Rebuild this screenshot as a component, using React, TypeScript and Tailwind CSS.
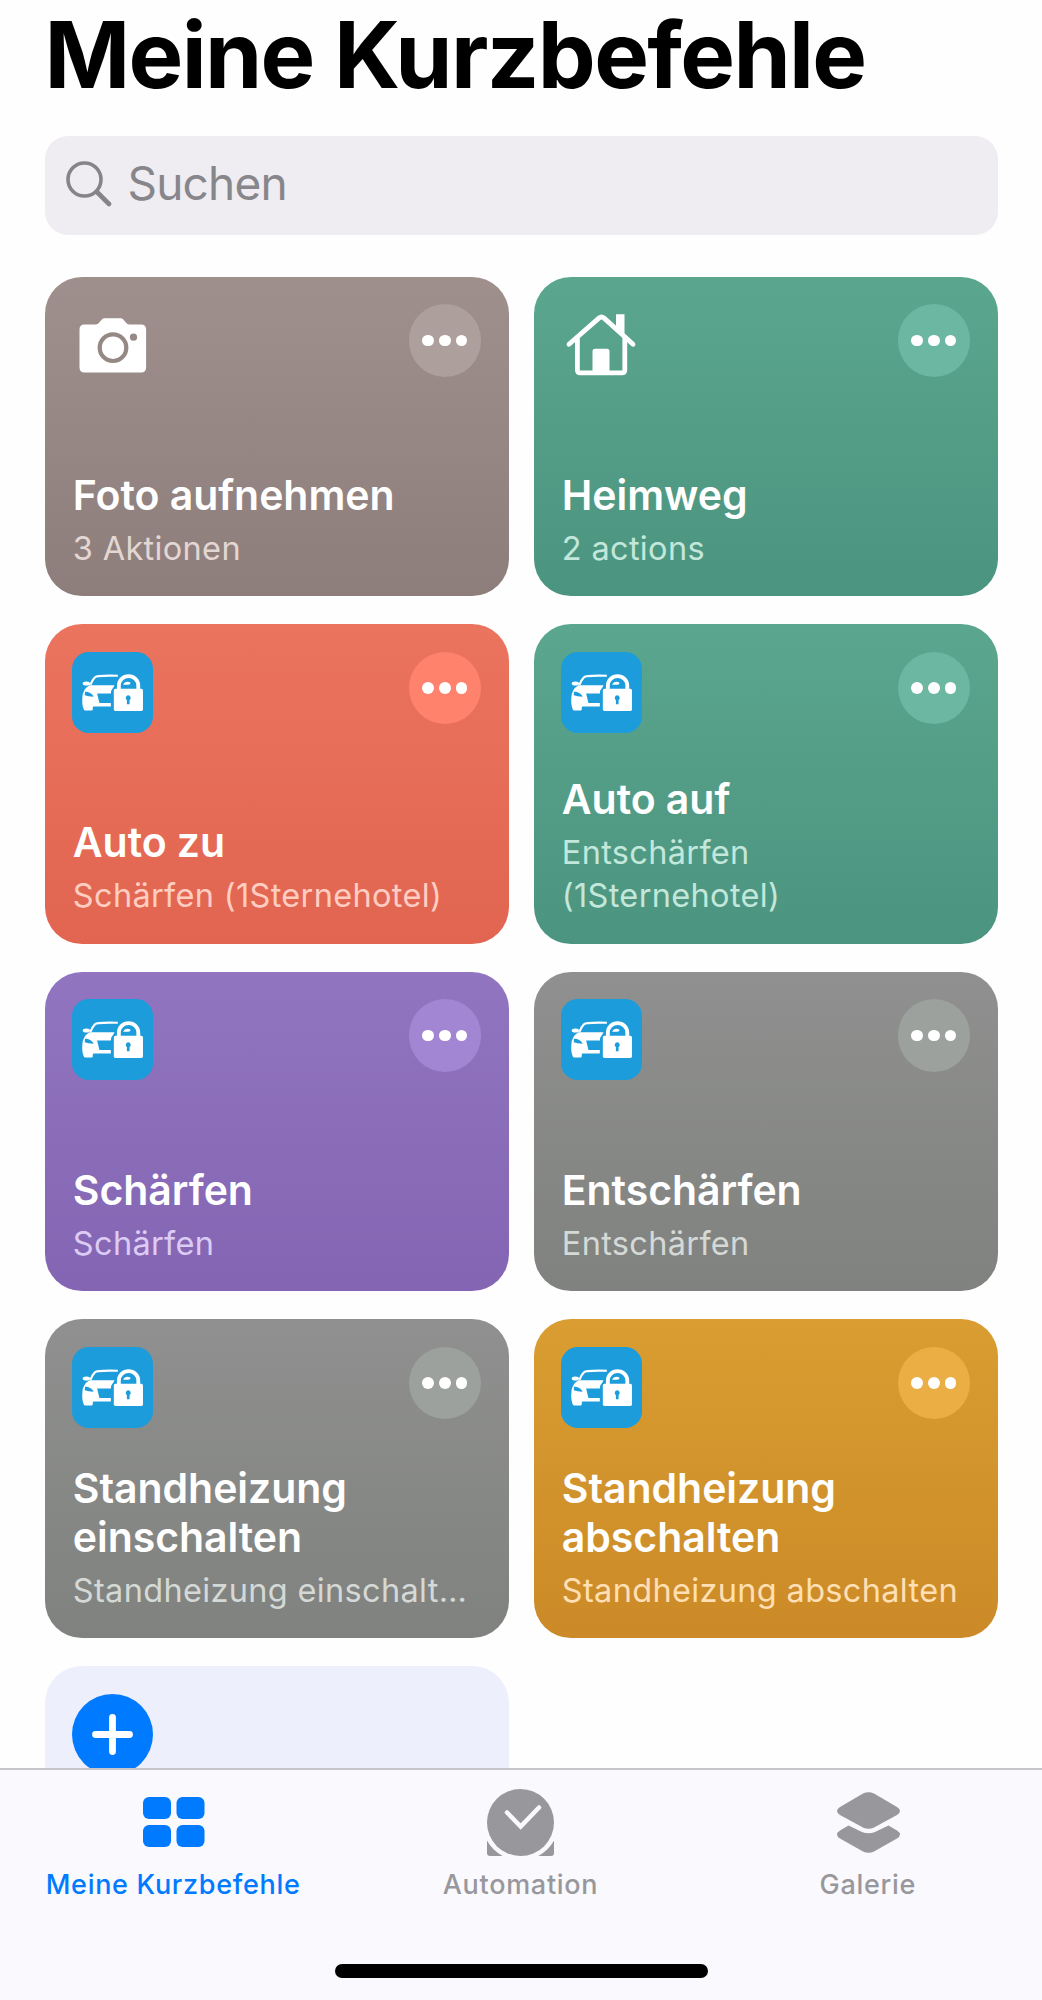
import React from 'react';

type IconKind = 'camera' | 'house' | 'car';

interface Shortcut {
  id: number;
  title: string;
  subtitle: string;
  wrap?: boolean;
  icon: IconKind;
  card: string;
  more: string;
  sub: string;
}

const shortcuts: Shortcut[] = [
  { id: 1, title: 'Foto aufnehmen', subtitle: '3 Aktionen', icon: 'camera', card: 'from-[#9f908d] to-[#8e7e7b]', more: 'bg-[#ac9f9c]', sub: 'text-[#e3d6d3]' },
  { id: 2, title: 'Heimweg', subtitle: '2 actions', icon: 'house', card: 'from-[#5ba68f] to-[#4b947f]', more: 'bg-[#6bb7a1]', sub: 'text-[#c3e7db]' },
  { id: 3, title: 'Auto zu', subtitle: 'Schärfen (1Sternehotel)', icon: 'car', card: 'from-[#eb745e] to-[#e16550]', more: 'bg-[#ff826d]', sub: 'text-[#ffcdc1]' },
  { id: 4, title: 'Auto auf', subtitle: 'Entschärfen (1Sternehotel)', wrap: true, icon: 'car', card: 'from-[#5ba68f] to-[#4b947f]', more: 'bg-[#6bb7a1]', sub: 'text-[#c3e7db]' },
  { id: 5, title: 'Schärfen', subtitle: 'Schärfen', icon: 'car', card: 'from-[#9275c0] to-[#8365b3]', more: 'bg-[#a386d3]', sub: 'text-[#dccbf4]' },
  { id: 6, title: 'Entschärfen', subtitle: 'Entschärfen', icon: 'car', card: 'from-[#8f908f] to-[#80827f]', more: 'bg-[#9ca19d]', sub: 'text-[#d5d9d6]' },
  { id: 7, title: 'Standheizung einschalten', subtitle: 'Standheizung einschalt…', icon: 'car', card: 'from-[#8f908f] to-[#80827f]', more: 'bg-[#9ca19d]', sub: 'text-[#d5d9d6]' },
  { id: 8, title: 'Standheizung abschalten', subtitle: 'Standheizung abschalten', icon: 'car', card: 'from-[#d99d31] to-[#cb8a27]', more: 'bg-[#ebae45]', sub: 'text-[#ffdfb4]' },
];

function CameraIcon() {
  return (
    <svg viewBox="0 -0.7 81 81" className="w-[81px] h-[81px]">
      <path
        fill="#fff"
        fillRule="evenodd"
        d="M12.5 19.7H24c1.2 0 2-.5 2.800-1.400l3-3.400c.8-.9 1.700-1.400 3-1.400h15.500c1.300 0 2.200.5 3 1.400l3 3.400c.8.9 1.600 1.400 2.800 1.400h12c3.200 0 5 1.800 5 5V62.700c0 3.200-1.800 5-5 5H12.500c-3.200 0-5-1.800-5-5V24.700c0-3.200 1.800-5 5-5Z"
      />
      <circle cx="41" cy="43" r="13.300" fill="none" stroke="#958885" strokeWidth="4.200" />
      <circle cx="61.500" cy="32.500" r="3.600" fill="#958885" />
    </svg>
  );
}

function HouseIcon() {
  return (
    <svg viewBox="0 -0.7 81 81" className="w-[81px] h-[81px]" fill="none" stroke="#fff" strokeLinecap="round" strokeLinejoin="round">
      <path strokeWidth="4.800" d="M8 39.600 38.200 13.200q2.300-1.900 4.600 0L72 39.600" />
      <path strokeWidth="4.800" d="M16.400 34v31.200q0 3 3 3h41.400q3 0 3-3V34" />
      <path fill="#fff" stroke="none" d="M55 9.500h8.500v22l-8.500-7z" />
      <path fill="#fff" stroke="none" d="M31.500 68V46.500q0-2.500 2.500-2.500h12q2.500 0 2.500 2.500V68z" />
    </svg>
  );
}

function CarLockIcon() {
  return (
    <svg viewBox="0 0 242 242" className="w-[81px] h-[81px]">
      <rect width="242" height="242" rx="50" fill="#1c9cdb" />
      {/* roof and mirror */}
      <path d="M55 98c4-10 8-17 13-22 3-3 6-4 11-4 18-2 38-2 58-1" fill="none" stroke="#fff" strokeWidth="6.500" />
      <ellipse cx="43" cy="94" rx="11" ry="6" fill="#fff" />
      {/* hood, headlight side and bumper */}
      <path
        fill="#fff"
        d="M52 99h75q-2 5-6 11-5 4-5 14H75l7 28h34v11H65q-3 0-3 4v4q0 4-4 4H40q-4 0-5-4-6-14-4-36 1-24 21-36z"
      />
      <path fill="#1c9cdb" d="M39 119q12-2 24 11l1 4q-16-1-26-5z" />
      {/* padlock */}
      <path d="M140 114V100a29 28 0 0 1 58 0v14" fill="none" stroke="#fff" strokeWidth="11.500" />
      <path d="M153 98c2-9 14-12 21-7 2 3-1 6-6 7z" fill="#fff" />
      <rect x="125" y="110" width="87" height="66" rx="5" fill="#fff" />
      <path fill="#1c9cdb" d="M168 129a8 8 0 0 1 4 14.500V156h-8v-12.500a8 8 0 0 1 4-14.500z" />
    </svg>
  );
}

function ShortcutIcon({ kind }: { kind: IconKind }) {
  if (kind === 'camera') return <CameraIcon />;
  if (kind === 'house') return <HouseIcon />;
  return <CarLockIcon />;
}

function ShortcutCard({ item }: { item: Shortcut }) {
  return (
    <div className={`flex flex-col justify-between h-[319.4px] rounded-[37px] bg-linear-to-b pl-[27.5px] pr-[27.5px] pt-[27.6px] pb-[25.6px] ${item.card}`}>
      <div className="flex items-start justify-between">
        <ShortcutIcon kind={item.icon} />
        <button className={`flex items-center justify-center gap-[5.3px] w-[72.5px] h-[72.5px] rounded-full ${item.more}`}>
          <span className="w-[11.5px] h-[11.5px] rounded-full bg-white" />
          <span className="w-[11.5px] h-[11.5px] rounded-full bg-white" />
          <span className="w-[11.5px] h-[11.5px] rounded-full bg-white" />
        </button>
      </div>
      <div className="flex flex-col gap-[7px] pl-[0.8px]">
        <h2 className="w-[340px] text-[41px] leading-[49px] font-semibold tracking-[-0.05px] text-white">{item.title}</h2>
        <p className={`text-[32.5px] leading-[43.6px] tracking-[0.33px] ${item.wrap ? 'w-[300px]' : 'whitespace-nowrap'} ${item.sub}`}>
          {item.subtitle}
        </p>
      </div>
    </div>
  );
}

function GridTabIcon() {
  return (
    <svg viewBox="0 0 62 50" className="w-[62px] h-[50px]" fill="#007aff">
      <rect width="28" height="22" rx="6" />
      <rect x="33.500" width="28" height="22" rx="6" />
      <rect y="28" width="28" height="22" rx="6" />
      <rect x="33.500" y="28" width="28" height="22" rx="6" />
    </svg>
  );
}

function AutomationTabIcon() {
  return (
    <svg viewBox="0 0 67 67" className="w-[67px] h-[67px]">
      <path d="M0 48v16q0 3 3 3h61q3 0 3-3V48z" fill="#98979c" />
      <circle cx="33.500" cy="33.500" r="38" fill="#f9f9fe" />
      <circle cx="33.500" cy="33.500" r="33.500" fill="#98979c" />
      <path d="m20 23.500 13.700 14L52 18.500" fill="none" stroke="#f9f9fe" strokeWidth="4.500" strokeLinecap="round" />
    </svg>
  );
}

function GalleryTabIcon() {
  return (
    <svg viewBox="0 0 63 61" className="w-[63px] h-[61px]" fill="#98979c">
      <path d="M26 1.500q5.500-2.500 11 0l23 13.500q6 4 0 8L37 35.500q-5.500 2.500-11 0L3 23q-6-4 0-8z" />
      <path d="M11.500 33.500 25 40q6.500 2.500 13 0l13.500-6.500L60 38.500q6 4 0 8L37 59.500q-5.500 2.500-11 0L3 46.500q-6-4 0-8z" />
    </svg>
  );
}

const tabs = [
  { label: 'Meine Kurzbefehle', icon: <GridTabIcon />, active: true },
  { label: 'Automation', icon: <AutomationTabIcon />, active: false },
  { label: 'Galerie', icon: <GalleryTabIcon />, active: false },
];

export default function App() {
  return (
    <div className="flex flex-col w-[1042px] h-[2000px] overflow-hidden bg-[#fefefe] font-[Inter,'Liberation_Sans',sans-serif]">
      <main className="flex flex-col h-[1768px] shrink-0 overflow-hidden px-[44.5px]">
        <h1 className="h-[110px] shrink-0 text-[92px] leading-[110px] font-bold tracking-[-1.65px] text-black whitespace-nowrap">
          Meine Kurzbefehle
        </h1>
        <div className="flex items-center h-[99px] shrink-0 mt-[25.5px] rounded-[23px] bg-[#efedf2] pl-[21px] gap-[16px]">
          <svg viewBox="0 0 46 46" className="w-[46px] h-[46px] mb-[2px]" fill="none" stroke="#858489" strokeLinecap="round">
            <circle cx="18.500" cy="18.500" r="16.500" strokeWidth="3.600" />
            <path d="m31 31 12 12" strokeWidth="4.600" />
          </svg>
          <span className="mb-[4px] text-[46px] leading-[56px] tracking-[-0.8px] text-[#87868b]">Suchen</span>
        </div>

        <div className="grid grid-cols-[464px_464px] gap-x-[25px] gap-y-7 mt-[42.400px] shrink-0">
          {shortcuts.map((item) => (
            <ShortcutCard key={item.id} item={item} />
          ))}
          <div className="h-[319.4px] rounded-[37px] bg-[#eeeffc] pl-[27.5px] pt-[27.6px]">
            <svg viewBox="0 0 81 81" className="w-[81px] h-[81px]">
              <circle cx="40.500" cy="40.500" r="40.500" fill="#007aff" />
              <path d="M40.500 23.500v34M23.500 40.500h34" stroke="#fff" strokeWidth="6.800" strokeLinecap="round" />
            </svg>
          </div>
        </div>
      </main>

      <footer className="flex flex-col items-center justify-between h-[232px] shrink-0 border-t-2 border-[#c6c5ca] bg-[#f9f9fe] pb-[22px]">
        <nav className="flex w-full">
          {tabs.map((tab) => (
            <div key={tab.label} className="flex flex-col items-center flex-1">
              <div className="flex items-center justify-center h-[67px] mt-[18.5px]">{tab.icon}</div>
              <span className={`mt-[12.5px] -ml-[1px] text-[27px] leading-[33px] font-medium tracking-[0.7px] whitespace-nowrap ${tab.active ? 'text-[#007aff]' : 'text-[#98979c]'}`}>
                {tab.label}
              </span>
            </div>
          ))}
        </nav>
        <div className="w-[373px] h-[14px] rounded-full bg-black" />
      </footer>
    </div>
  );
}
